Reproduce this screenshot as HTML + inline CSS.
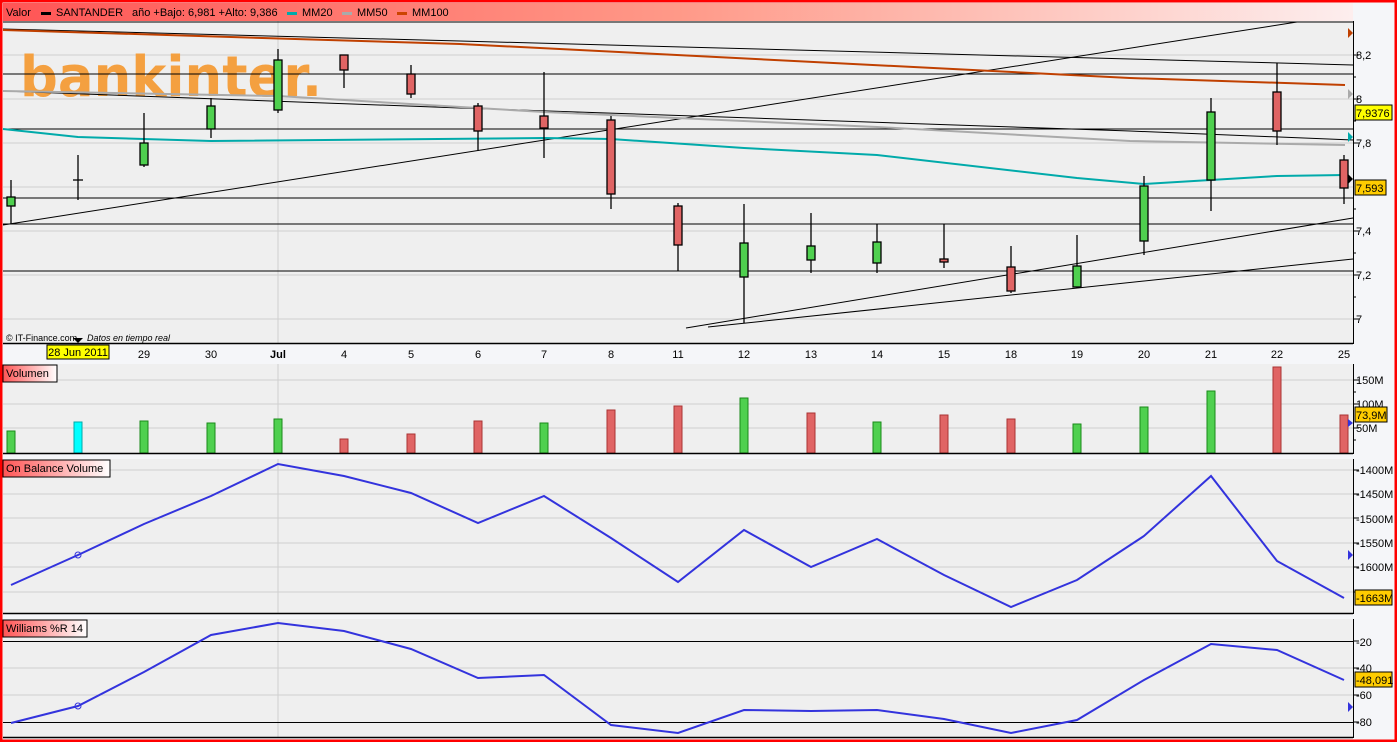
<!DOCTYPE html>
<html><head><meta charset="utf-8"><style>
body{margin:0;background:#fff;width:1397px;height:742px;overflow:hidden}
svg{display:block;font-family:"Liberation Sans",sans-serif}
</style></head><body>
<svg width="1397" height="742" viewBox="0 0 1397 742" xmlns="http://www.w3.org/2000/svg">
<defs>
<linearGradient id="hg" x1="0" x2="1"><stop offset="0" stop-color="#f55"/><stop offset="0.5" stop-color="#f98"/><stop offset="1" stop-color="#fdeeee"/></linearGradient>
<linearGradient id="tg" x1="0" x2="1"><stop offset="0" stop-color="#f55"/><stop offset="1" stop-color="#fff"/></linearGradient>
</defs>
<rect width="1397" height="742" fill="#f5f6f9"/>
<rect x="3" y="21" width="1350" height="322" fill="#efefef"/>
<rect x="3" y="3" width="1350" height="18" fill="url(#hg)"/>
<g font-size="11" fill="#000">
<text x="6" y="16">Valor</text><rect x="41" y="12" width="10" height="3"/>
<text x="56" y="16">SANTANDER</text>
<text x="132" y="16">año +Bajo: 6,981 +Alto: 9,386</text>
<rect x="287" y="12" width="10" height="3" fill="#0aa"/><text x="302" y="16">MM20</text>
<rect x="342" y="12" width="10" height="3" fill="#aaa"/><text x="357" y="16">MM50</text>
<rect x="397" y="12" width="10" height="3" fill="#c40"/><text x="412" y="16">MM100</text>
</g>
<g stroke="#cfcfcf" stroke-width="1">
<line x1="3" y1="55" x2="1353" y2="55"/><line x1="3" y1="99" x2="1353" y2="99"/><line x1="3" y1="143" x2="1353" y2="143"/>
<line x1="3" y1="187" x2="1353" y2="187"/><line x1="3" y1="231" x2="1353" y2="231"/><line x1="3" y1="275" x2="1353" y2="275"/><line x1="3" y1="319" x2="1353" y2="319"/>
<line x1="278" y1="21" x2="278" y2="343"/>
</g>
<text x="20" y="96" font-size="56" font-weight="bold" fill="#f4a040" font-family="'DejaVu Sans',sans-serif" textLength="302" lengthAdjust="spacingAndGlyphs">bankinter.</text>
<g fill="none" stroke="#000" stroke-width="1">
<line x1="3" y1="22" x2="1353" y2="22"/>
<line x1="3" y1="74" x2="1353" y2="74"/><line x1="3" y1="129" x2="1353" y2="129"/>
<line x1="3" y1="198" x2="1353" y2="198"/><line x1="3" y1="224" x2="1353" y2="224"/><line x1="3" y1="271" x2="1353" y2="271"/>
<polyline points="3,29 460,41 1130,59 1353,65"/>
<polyline points="3,91 460,108 1130,131 1353,140"/>
<line x1="3" y1="225" x2="1297" y2="22"/>
<line x1="686" y1="328" x2="1353" y2="218"/>
<line x1="708" y1="327" x2="1353" y2="259"/>
</g>
<polyline fill="none" stroke="#c04000" stroke-width="2" points="3,30 460,44 1130,78 1345,85"/>
<polyline fill="none" stroke="#aaa" stroke-width="2" points="3,91 278,96 544,112 877,127 1130,141 1345,145"/>
<polyline fill="none" stroke="#0aa" stroke-width="2" points="3,129 78,137 211,141 544,138 611,139 744,148 877,155 1077,178 1144,184 1277,176 1345,175"/>
<g stroke="#000" stroke-width="1.3">
<line x1="11" y1="180" x2="11" y2="224"/><line x1="78" y1="155" x2="78" y2="200"/><line x1="144" y1="113" x2="144" y2="167"/>
<line x1="211" y1="98" x2="211" y2="138"/><line x1="278" y1="49" x2="278" y2="113"/><line x1="344" y1="55" x2="344" y2="88"/>
<line x1="411" y1="65" x2="411" y2="98"/><line x1="478" y1="103" x2="478" y2="151"/><line x1="544" y1="72" x2="544" y2="158"/>
<line x1="611" y1="116" x2="611" y2="209"/><line x1="678" y1="203" x2="678" y2="271"/><line x1="744" y1="204" x2="744" y2="323"/>
<line x1="811" y1="213" x2="811" y2="273"/><line x1="877" y1="224" x2="877" y2="273"/><line x1="944" y1="224" x2="944" y2="268"/>
<line x1="1011" y1="246" x2="1011" y2="293"/><line x1="1077" y1="235" x2="1077" y2="288"/><line x1="1144" y1="176" x2="1144" y2="255"/>
<line x1="1211" y1="98" x2="1211" y2="211"/><line x1="1277" y1="63" x2="1277" y2="145"/><line x1="1344" y1="155" x2="1344" y2="204"/>
<line x1="73" y1="180" x2="83" y2="180"/>
</g>
<g stroke="#000" stroke-width="1.3" fill="#4fd04f">
<rect x="7" y="197" width="8" height="9"/><rect x="140" y="143" width="8" height="22"/><rect x="207" y="106" width="8" height="23"/>
<rect x="274" y="60" width="8" height="50"/><rect x="740" y="243" width="8" height="34"/><rect x="807" y="246" width="8" height="14"/>
<rect x="873" y="242" width="8" height="21"/><rect x="1073" y="266" width="8" height="21"/><rect x="1140" y="186" width="8" height="55"/>
<rect x="1207" y="112" width="8" height="68"/>
</g>
<g stroke="#000" stroke-width="1.3" fill="#e06464">
<rect x="340" y="55" width="8" height="15"/><rect x="407" y="74" width="8" height="20"/><rect x="474" y="106" width="8" height="25"/>
<rect x="540" y="116" width="8" height="12"/><rect x="607" y="120" width="8" height="74"/><rect x="674" y="206" width="8" height="39"/>
<rect x="940" y="259" width="8" height="3"/><rect x="1007" y="267" width="8" height="24"/><rect x="1273" y="92" width="8" height="39"/>
<rect x="1340" y="160" width="8" height="28"/>
</g>
<text x="6" y="341" font-size="9">© IT-Finance.com</text><text x="87" y="341" font-size="9" font-style="italic">Datos en tiempo real</text>
<line x1="3" y1="343.5" x2="1353" y2="343.5" stroke="#000" stroke-width="1.5"/>
<line x1="1353.5" y1="21" x2="1353.5" y2="344" stroke="#000"/>
<g stroke="#000"><line x1="1353" y1="55" x2="1359" y2="55"/><line x1="1353" y1="99" x2="1359" y2="99"/><line x1="1353" y1="143" x2="1359" y2="143"/><line x1="1353" y1="231" x2="1359" y2="231"/><line x1="1353" y1="275" x2="1359" y2="275"/><line x1="1353" y1="319" x2="1359" y2="319"/>
<line x1="1353" y1="77" x2="1356" y2="77"/><line x1="1353" y1="121" x2="1356" y2="121"/><line x1="1353" y1="209" x2="1356" y2="209"/><line x1="1353" y1="253" x2="1356" y2="253"/><line x1="1353" y1="297" x2="1356" y2="297"/></g>
<g font-size="11"><text x="1356" y="59">8,2</text><text x="1356" y="103">8</text><text x="1356" y="147">7,8</text><text x="1356" y="235">7,4</text><text x="1356" y="279">7,2</text><text x="1356" y="323">7</text></g>
<polygon points="1348,28 1353,33 1348,38" fill="#c04000"/><polygon points="1348,89 1353,94 1348,99" fill="#aaa"/><polygon points="1348,132 1353,137 1348,142" fill="#0aa"/><polygon points="1348,174 1353,179 1348,184" fill="#000"/>
<rect x="1355" y="105" width="37" height="15" fill="#ff0" stroke="#000"/><text x="1356" y="117" font-size="11">7,9376</text>
<rect x="1355" y="180" width="31" height="15" fill="#fc0" stroke="#000"/><text x="1356" y="192" font-size="11">7,593</text>
<rect x="3" y="345" width="1350" height="17" fill="#f5f6f9"/>
<g font-size="11" text-anchor="middle"><text x="144" y="358">29</text><text x="211" y="358">30</text><text x="278" y="358" font-weight="bold">Jul</text><text x="344" y="358">4</text><text x="411" y="358">5</text><text x="478" y="358">6</text><text x="544" y="358">7</text><text x="611" y="358">8</text><text x="678" y="358">11</text><text x="744" y="358">12</text><text x="811" y="358">13</text><text x="877" y="358">14</text><text x="944" y="358">15</text><text x="1011" y="358">18</text><text x="1077" y="358">19</text><text x="1144" y="358">20</text><text x="1211" y="358">21</text><text x="1277" y="358">22</text><text x="1344" y="358">25</text></g>
<rect x="47" y="345" width="62" height="14" fill="#ff0" stroke="#000"/><text x="78" y="356" font-size="11" text-anchor="middle">28 Jun 2011</text>
<polygon points="73,338 83,338 78,343" fill="#000"/>
<rect x="3" y="364" width="1350" height="89" fill="#efefef"/>
<g stroke="#cfcfcf"><line x1="3" y1="380" x2="1353" y2="380"/><line x1="3" y1="404" x2="1353" y2="404"/><line x1="3" y1="428" x2="1353" y2="428"/><line x1="278" y1="364" x2="278" y2="453"/></g>
<rect x="3" y="365" width="54" height="17" fill="url(#tg)" stroke="#000"/><text x="6" y="377" font-size="11">Volumen</text>
<g stroke="#1a8a1a" fill="#4fd04f"><rect x="7" y="431" width="8" height="22"/><rect x="140" y="421" width="8" height="32"/><rect x="207" y="423" width="8" height="30"/><rect x="274" y="419" width="8" height="34"/><rect x="540" y="423" width="8" height="30"/><rect x="740" y="398" width="8" height="55"/><rect x="807" y="413" width="8" height="40" fill="#e06464" stroke="#a33"/><rect x="873" y="422" width="8" height="31"/><rect x="1073" y="424" width="8" height="29"/><rect x="1140" y="407" width="8" height="46"/><rect x="1207" y="391" width="8" height="62"/></g>
<rect x="74" y="422" width="8" height="31" fill="#0ff" stroke="#0aa"/>
<g stroke="#a33" fill="#e06464"><rect x="340" y="439" width="8" height="14"/><rect x="407" y="434" width="8" height="19"/><rect x="474" y="421" width="8" height="32"/><rect x="607" y="410" width="8" height="43"/><rect x="674" y="406" width="8" height="47"/><rect x="940" y="415" width="8" height="38"/><rect x="1007" y="419" width="8" height="34"/><rect x="1273" y="367" width="8" height="86"/><rect x="1340" y="415" width="8" height="38"/></g>
<line x1="3" y1="453.5" x2="1353" y2="453.5" stroke="#000" stroke-width="1.5"/><line x1="1353.5" y1="364" x2="1353.5" y2="454" stroke="#000"/>
<g stroke="#000"><line x1="1353" y1="380" x2="1359" y2="380"/><line x1="1353" y1="404" x2="1359" y2="404"/><line x1="1353" y1="428" x2="1359" y2="428"/><line x1="1353" y1="392" x2="1356" y2="392"/><line x1="1353" y1="440" x2="1356" y2="440"/></g>
<g font-size="11"><text x="1356" y="384">150M</text><text x="1356" y="408">100M</text><text x="1356" y="432">50M</text></g>
<rect x="1355" y="407" width="32" height="15" fill="#fc0" stroke="#000"/><text x="1356" y="419" font-size="11">73,9M</text>
<polygon points="1348,419 1353,423 1348,427" fill="#33d"/>
<rect x="3" y="459" width="1350" height="154" fill="#efefef"/>
<g stroke="#cfcfcf"><line x1="3" y1="470" x2="1353" y2="470"/><line x1="3" y1="494" x2="1353" y2="494"/><line x1="3" y1="518" x2="1353" y2="518"/><line x1="3" y1="543" x2="1353" y2="543"/><line x1="3" y1="567" x2="1353" y2="567"/><line x1="3" y1="592" x2="1353" y2="592"/><line x1="278" y1="459" x2="278" y2="613"/></g>
<rect x="3" y="460" width="107" height="17" fill="url(#tg)" stroke="#000"/><text x="6" y="472" font-size="11">On Balance Volume</text>
<polyline fill="none" stroke="#33d" stroke-width="2" points="11,585 78,555 144,524 211,496 278,464 344,476 411,493 478,523 544,496 611,538 678,582 744,530 811,567 877,539 944,575 1011,607 1077,580 1144,536 1211,476 1277,561 1344,598"/>
<circle cx="78" cy="555" r="3" fill="none" stroke="#33d"/>
<line x1="3" y1="613.5" x2="1353" y2="613.5" stroke="#000" stroke-width="1.5"/><line x1="1353.5" y1="459" x2="1353.5" y2="614" stroke="#000"/>
<g font-size="11"><text x="1356" y="474">-1400M</text><text x="1356" y="498">-1450M</text><text x="1356" y="523">-1500M</text><text x="1356" y="547">-1550M</text><text x="1356" y="571">-1600M</text></g>
<g stroke="#000"><line x1="1353" y1="470" x2="1359" y2="470"/><line x1="1353" y1="494" x2="1359" y2="494"/><line x1="1353" y1="518" x2="1359" y2="518"/><line x1="1353" y1="543" x2="1359" y2="543"/><line x1="1353" y1="567" x2="1359" y2="567"/><line x1="1353" y1="592" x2="1359" y2="592"/></g>
<rect x="1355" y="590" width="37" height="15" fill="#fc0" stroke="#000"/><text x="1356" y="602" font-size="11">-1663M</text>
<polygon points="1348,550 1353,555 1348,560" fill="#33d"/>
<rect x="3" y="619" width="1350" height="118" fill="#efefef"/>
<g stroke="#cfcfcf"><line x1="3" y1="668" x2="1353" y2="668"/><line x1="3" y1="695" x2="1353" y2="695"/><line x1="278" y1="619" x2="278" y2="737"/></g>
<g stroke="#000"><line x1="3" y1="641.5" x2="1353" y2="641.5"/><line x1="3" y1="722.5" x2="1353" y2="722.5"/></g>
<rect x="3" y="620" width="84" height="17" fill="url(#tg)" stroke="#000"/><text x="6" y="632" font-size="11">Williams %R 14</text>
<polyline fill="none" stroke="#33d" stroke-width="2" points="11,723 78,706 144,672 211,635 278,623 344,631 411,649 478,678 544,675 611,725 678,733 744,710 811,711 877,710 944,719 1011,733 1077,720 1144,680 1211,644 1277,650 1344,680"/>
<circle cx="78" cy="706" r="3" fill="none" stroke="#33d"/>
<line x1="3" y1="737.5" x2="1353" y2="737.5" stroke="#000" stroke-width="1.5"/><line x1="1353.5" y1="619" x2="1353.5" y2="738" stroke="#000"/>
<g font-size="11"><text x="1356" y="646">-20</text><text x="1356" y="672">-40</text><text x="1356" y="699">-60</text><text x="1356" y="726">-80</text></g>
<g stroke="#000"><line x1="1353" y1="641" x2="1359" y2="641"/><line x1="1353" y1="668" x2="1359" y2="668"/><line x1="1353" y1="695" x2="1359" y2="695"/><line x1="1353" y1="722" x2="1359" y2="722"/></g>
<rect x="1355" y="672" width="37" height="15" fill="#fc0" stroke="#000"/><text x="1356" y="684" font-size="11">-48,091</text>
<polygon points="1348,702 1353,707 1348,712" fill="#33d"/>
<rect x="1" y="1" width="1395" height="740" fill="none" stroke="#f00" stroke-width="3"/>
</svg>
</body></html>
